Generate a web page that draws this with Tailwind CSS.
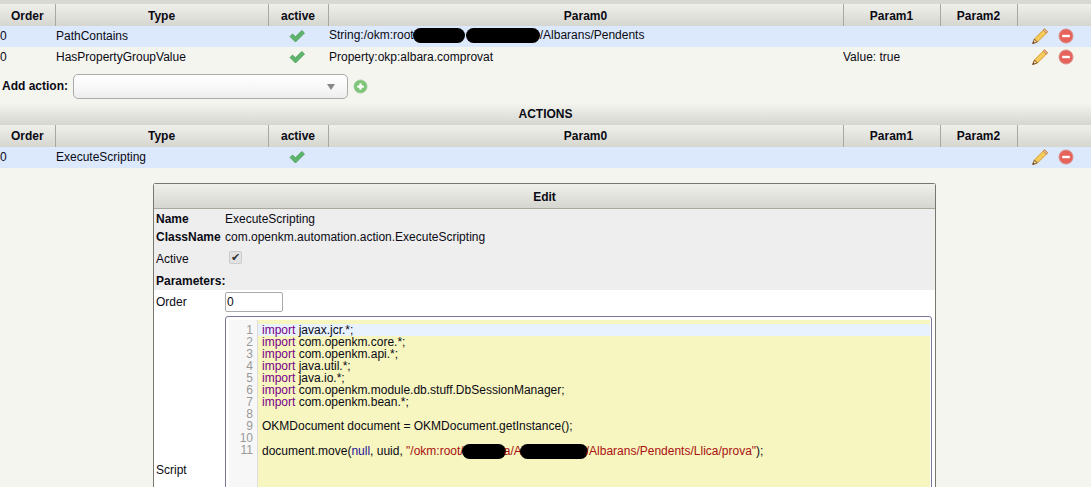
<!DOCTYPE html>
<html lang="en">
<head>
  <meta charset="UTF-8" />
  <title>Automation</title>
  <script src="https://cdn.jsdelivr.net/npm/@tailwindcss/browser@4"></script>
</head>
<body class="h-[487px] overflow-hidden bg-[#f5f5ef] font-['Liberation_Sans',Arial,sans-serif] text-[12px] leading-[14px] text-[#0a0a14]">

  <svg class="hidden">
    <symbol id="check" viewBox="0 0 16 16"><path d="M1 8.5 3.5 6l3 2.8L12.8 2.5 15.5 5 6.5 14z" fill="#5cb56a" stroke="#4a9a58" stroke-width=".8"/></symbol>
    <symbol id="pencil" viewBox="0 0 16 16"><path d="M12.6 .8 15.6 3.8 5.4 14 2.4 11z" fill="#f5cc5a" stroke="#d59a2c"/><path d="M12.6 .8 15.6 3.8 14.2 5.2 11.2 2.2z" fill="#eeb98d" stroke="#c08a60"/><path d="M2.4 11 5.4 14 .6 15.6z" fill="#eed9b0" stroke="#8a5a20"/><path d="M.6 15.6l.7-2.1 1.4 1.4z" fill="#5a3a10"/></symbol>
    <symbol id="minus" viewBox="0 0 16 16"><circle cx="8" cy="8" r="7" fill="#e8625c" stroke="#d9908a"/><rect x="4.2" y="6.8" width="7.6" height="2.4" fill="#fff"/></symbol>
  </svg>

  <div class="h-[4px] bg-[#d9d9d3]"></div>

  <table class="w-full table-fixed border-collapse">
    <colgroup><col class="w-[55px]"><col class="w-[213px]"><col class="w-[60px]"><col class="w-[515px]"><col class="w-[97px]"><col class="w-[77px]"><col></colgroup>
    <thead>
      <tr class="h-[22px] bg-gradient-to-b from-[#f0f0ea] to-[#d6d6d0] font-bold">
        <th class="border-r border-[#a8a89c] pt-px">Order</th>
        <th class="border-r border-[#a8a89c] pt-px">Type</th>
        <th class="border-r border-[#a8a89c] pt-px">active</th>
        <th class="border-r border-[#a8a89c] pt-px">Param0</th>
        <th class="border-r border-[#a8a89c] pt-px">Param1</th>
        <th class="border-r border-[#a8a89c] pt-px">Param2</th>
        <th></th>
      </tr>
    </thead>
    <tbody>
      <tr class="h-[21px] bg-[#dce9fd]">
        <td class="pb-[2px]">0</td>
        <td class="pb-[2px] pl-px">PathContains</td>
        <td class="pb-[2px]"><svg class="mx-auto size-[16px] -translate-x-px"><use href="#check"/></svg></td>
        <td class="whitespace-nowrap pb-[2px] pl-px">String:/okm:root<span class="mx-[-1px] inline-block h-[15px] w-[52px] rounded-full bg-black align-middle"></span><span class="inline-block w-[2px]"></span><span class="inline-block h-[15px] w-[74px] rounded-full bg-black align-middle"></span>/Albarans/Pendents</td>
        <td></td>
        <td></td>
        <td class="pb-[2px]">
          <div class="flex items-center gap-[10px] pl-[15px]"><svg class="size-[16px]"><use href="#pencil"/></svg><svg class="size-[16px]"><use href="#minus"/></svg></div>
        </td>
      </tr>
      <tr class="h-[21px]">
        <td class="pb-[2px]">0</td>
        <td class="pb-[2px] pl-px">HasPropertyGroupValue</td>
        <td class="pb-[2px]"><svg class="mx-auto size-[16px] -translate-x-px"><use href="#check"/></svg></td>
        <td class="pb-[2px] pl-px">Property:okp:albara.comprovat</td>
        <td class="pb-[2px]">Value: true</td>
        <td></td>
        <td class="pb-[2px]">
          <div class="flex items-center gap-[10px] pl-[15px]"><svg class="size-[16px]"><use href="#pencil"/></svg><svg class="size-[16px]"><use href="#minus"/></svg></div>
        </td>
      </tr>
    </tbody>
  </table>

  <div class="flex h-[35px] items-center pl-[2px] pt-[2px]">
    <span class="w-[71px] pb-px font-bold">Add action:</span>
    <div class="flex h-[25px] w-[275px] items-center justify-end rounded-[5px] border border-[#aaaaaa] bg-gradient-to-b from-white via-[#f8f8f8] to-[#eeeeee] pr-[12px]">
      <span class="size-0 border-x-[4px] border-t-[6px] border-x-transparent border-t-[#888888]"></span>
    </div>
    <svg class="ml-[5px] size-[15px]" viewBox="0 0 16 16"><circle cx="8" cy="8" r="7" fill="#7cc576" stroke="#a8cfa4"/><path d="M8 4.5v7M4.5 8h7" stroke="#fff" stroke-width="2.4"/></svg>
  </div>

  <div class="flex h-[22px] items-center justify-center bg-gradient-to-b from-[#f5f5ef] to-[#d6d6d0] font-bold">ACTIONS</div>

  <table class="w-full table-fixed border-collapse">
    <colgroup><col class="w-[55px]"><col class="w-[213px]"><col class="w-[60px]"><col class="w-[515px]"><col class="w-[97px]"><col class="w-[77px]"><col></colgroup>
    <thead>
      <tr class="h-[22px] bg-gradient-to-b from-[#f0f0ea] to-[#d6d6d0] font-bold">
        <th class="border-r border-[#a8a89c]">Order</th>
        <th class="border-r border-[#a8a89c]">Type</th>
        <th class="border-r border-[#a8a89c]">active</th>
        <th class="border-r border-[#a8a89c]">Param0</th>
        <th class="border-r border-[#a8a89c]">Param1</th>
        <th class="border-r border-[#a8a89c]">Param2</th>
        <th></th>
      </tr>
    </thead>
    <tbody>
      <tr class="h-[21px] bg-[#dce9fd]">
        <td class="pb-[2px]">0</td>
        <td class="pb-[2px] pl-px">ExecuteScripting</td>
        <td class="pb-[2px]"><svg class="mx-auto size-[16px] -translate-x-px"><use href="#check"/></svg></td>
        <td></td>
        <td></td>
        <td></td>
        <td class="pb-[2px]">
          <div class="flex items-center gap-[10px] pl-[15px]"><svg class="size-[16px]"><use href="#pencil"/></svg><svg class="size-[16px]"><use href="#minus"/></svg></div>
        </td>
      </tr>
    </tbody>
  </table>

  <!-- edit box -->
  <div class="ml-[153px] mt-[15px] w-[783px] rounded-t-[3px] border-x border-t border-[#77776f] bg-white">
    <div class="flex h-[25px] items-center justify-center border-b border-[#a8a89c] bg-gradient-to-b from-[#f0f0ea] to-[#d6d6d0] pt-[2px] font-bold">Edit</div>

    <div class="bg-[#eeeeee] pl-[2px]">
      <div class="flex h-[18px] items-center pt-[2px]"><span class="w-[69px] font-bold">Name</span><span>ExecuteScripting</span></div>
      <div class="flex h-[18px] items-center pt-[2px]"><span class="w-[69px] font-bold">ClassName</span><span>com.openkm.automation.action.ExecuteScripting</span></div>
      <div class="flex h-[25px] items-center pt-[2px]">
        <span class="w-[73px]">Active</span>
        <span class="flex size-[13px] -translate-y-px items-center justify-center rounded-[2px] border border-[#cccccc] bg-[#e2e2e2] text-[11px] leading-none text-[#333333]">✔</span>
      </div>
      <div class="flex h-[20px] items-center pt-px font-bold">Parameters:</div>
    </div>

    <div class="mb-[2px] flex h-[24px] items-center pl-[2px]">
      <span class="w-[69px]">Order</span>
      <span class="flex h-[20px] w-[58px] items-center rounded-[2px] border border-[#aaaaaa] pl-px">0</span>
    </div>

    <div class="flex items-center pl-[2px]">
      <span class="w-[69px]">Script</span>
      <!-- code editor -->
      <div class="flex h-[308px] w-[707px] rounded-[3px] border border-[#77779a] bg-white py-[3px] pl-[3px] pr-px text-[12px] leading-[12px]">
        <div class="w-[29px] border-r border-[#dddddd] bg-[#f7f7f7] pr-[4px] pt-[4px] text-right text-[#999999]">
          <div>1</div><div>2</div><div>3</div><div>4</div><div>5</div><div>6</div><div>7</div><div>8</div><div>9</div><div>10</div><div>11</div>
        </div>
        <div class="flex-1 whitespace-nowrap bg-[#f7f5c0] pt-[4px]">
          <div class="bg-[#e8f2ff] pl-[4px]"><span class="text-[#770088]">import</span> javax.jcr.*;</div>
          <div class="pl-[4px]"><span class="text-[#770088]">import</span> com.openkm.core.*;</div>
          <div class="pl-[4px]"><span class="text-[#770088]">import</span> com.openkm.api.*;</div>
          <div class="pl-[4px]"><span class="text-[#770088]">import</span> java.util.*;</div>
          <div class="pl-[4px]"><span class="text-[#770088]">import</span> java.io.*;</div>
          <div class="pl-[4px]"><span class="text-[#770088]">import</span> com.openkm.module.db.stuff.DbSessionManager;</div>
          <div class="pl-[4px]"><span class="text-[#770088]">import</span> com.openkm.bean.*;</div>
          <div class="h-[12px]"></div>
          <div class="pl-[4px]">OKMDocument document = OKMDocument.getInstance();</div>
          <div class="h-[12px]"></div>
          <div class="pl-[4px]">document.move(<span class="text-[#221199]">null</span>, uuid, <span class="text-[#aa1111]">"/okm:root/<span class="mx-[-2px] inline-block h-[15px] w-[44px] rounded-full bg-black align-middle"></span>a/A<span class="mx-[-2px] inline-block h-[15px] w-[68px] rounded-full bg-black align-middle"></span>/Albarans/Pendents/Llica/prova"</span>);</div>
        </div>
      </div>
    </div>
  </div>
</body>
</html>
